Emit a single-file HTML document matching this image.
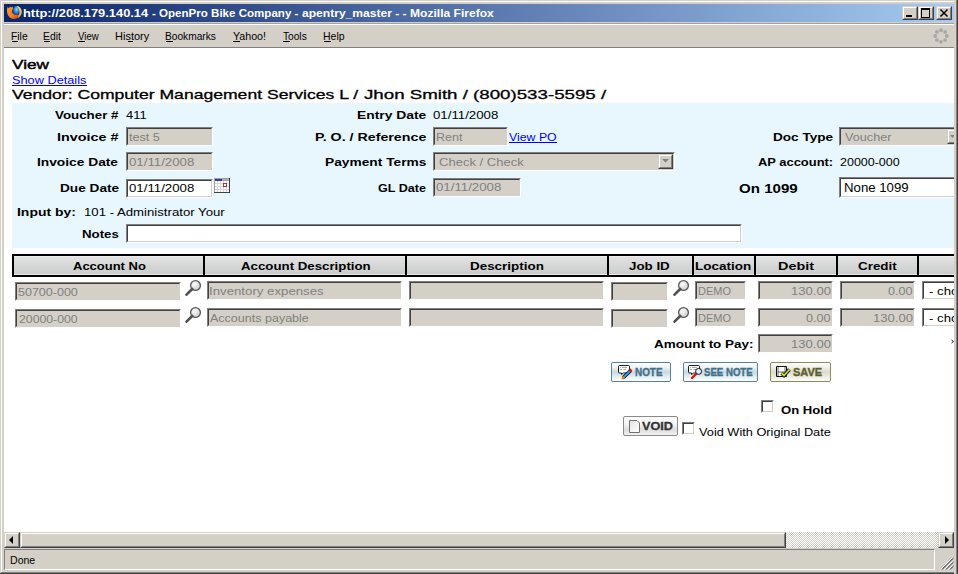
<!DOCTYPE html>
<html><head><meta charset="utf-8"><style>
html,body{margin:0;padding:0;width:958px;height:574px;overflow:hidden;background:#D4D0C8;}
.box{position:absolute;box-sizing:content-box;}
.t{position:absolute;white-space:nowrap;font-family:"Liberation Sans",sans-serif;transform-origin:0 0;}
</style></head><body>
<div class="box" style="left:0;top:0;width:958px;height:574px;background:#404040"></div>
<div class="box" style="left:0;top:0;width:957px;height:573px;background:#D4D0C8"></div>
<div class="box" style="left:1px;top:1px;width:956px;height:572px;background:#808080"></div>
<div class="box" style="left:1px;top:1px;width:955px;height:571px;background:#fff"></div>
<div class="box" style="left:2px;top:2px;width:954px;height:570px;background:#D4D0C8"></div>
<div class="box" style="left:4px;top:4px;width:950px;height:18px;background:linear-gradient(to right,#0A246A,#A6CAF0)"></div>
<svg class="box" style="left:6px;top:4px" width="16" height="16" viewBox="0 0 16 16">
<defs><radialGradient id="gb" cx="0.5" cy="0.35" r="0.6"><stop offset="0" stop-color="#8fd8ff"/><stop offset="0.5" stop-color="#2f86d8"/><stop offset="1" stop-color="#0c2f7a"/></radialGradient>
<linearGradient id="fx" x1="0" y1="0" x2="1" y2="1"><stop offset="0" stop-color="#f7a030"/><stop offset="0.6" stop-color="#f08020"/><stop offset="1" stop-color="#c83a10"/></linearGradient>
<linearGradient id="tl" x1="0" y1="0" x2="0" y2="1"><stop offset="0" stop-color="#ffe060"/><stop offset="1" stop-color="#f0a030"/></linearGradient></defs>
<ellipse cx="10.5" cy="7" rx="3.6" ry="5" fill="url(#gb)"/>
<path d="M11 2 C14.5 2.5 16 6 15.8 8.5 C15.5 11 14 13 12 14 L11 12.5 C12.8 11.5 13.8 9.5 13.5 7.5 C13.2 5 12 3.5 11 2 Z" fill="url(#tl)"/>
<path d="M1.5 3 L3 4.2 L4 2.5 L5 3.5 L6.5 2.5 L7.2 4.8 C6 5.8 5.8 7.5 6.5 9 C7.5 10.5 9.5 11.2 11.5 10.5 L12.5 13.5 C10 15.5 6 15.5 3.5 13.2 C1 11 0.3 7 1.5 3 Z" fill="url(#fx)"/>
</svg>
<div class="box" style="left:902px;top:6px;width:14px;height:12px;background:#D4D0C8;border-top:1px solid #D4D0C8;border-left:1px solid #D4D0C8;border-bottom:1px solid #404040;border-right:1px solid #404040;"><div class="box" style="left:0;top:0;right:0;bottom:0;border-top:1px solid #fff;border-left:1px solid #fff;border-bottom:1px solid #808080;border-right:1px solid #808080;"></div></div>
<div class="box" style="left:918px;top:6px;width:14px;height:12px;background:#D4D0C8;border-top:1px solid #D4D0C8;border-left:1px solid #D4D0C8;border-bottom:1px solid #404040;border-right:1px solid #404040;"><div class="box" style="left:0;top:0;right:0;bottom:0;border-top:1px solid #fff;border-left:1px solid #fff;border-bottom:1px solid #808080;border-right:1px solid #808080;"></div></div>
<div class="box" style="left:936px;top:6px;width:14px;height:12px;background:#D4D0C8;border-top:1px solid #D4D0C8;border-left:1px solid #D4D0C8;border-bottom:1px solid #404040;border-right:1px solid #404040;"><div class="box" style="left:0;top:0;right:0;bottom:0;border-top:1px solid #fff;border-left:1px solid #fff;border-bottom:1px solid #808080;border-right:1px solid #808080;"></div></div>
<div class="box" style="left:906px;top:15px;width:6px;height:2px;background:#000"></div>
<div class="box" style="left:921px;top:8px;width:7px;height:7px;border:1px solid #000;border-top-width:2px"></div>
<svg class="box" style="left:936px;top:6px" width="16" height="14"><path d="M4.5 3.5 L11.5 10.5 M11.5 3.5 L4.5 10.5" stroke="#000" stroke-width="1.6"/></svg>
<div class="box" style="left:4px;top:23px;width:950px;height:1px;background:#A0A0A0"></div>
<div class="box" style="left:4px;top:24px;width:950px;height:1px;background:#fff"></div>
<div class="box" style="left:4px;top:47px;width:950px;height:1px;background:#808080"></div>
<div class="box" style="left:12px;top:41px;width:6px;height:1px;background:#000"></div>
<div class="box" style="left:44px;top:41px;width:6px;height:1px;background:#000"></div>
<div class="box" style="left:78px;top:41px;width:7px;height:1px;background:#000"></div>
<div class="box" style="left:128px;top:41px;width:5px;height:1px;background:#000"></div>
<div class="box" style="left:166px;top:41px;width:7px;height:1px;background:#000"></div>
<div class="box" style="left:233px;top:41px;width:7px;height:1px;background:#000"></div>
<div class="box" style="left:283px;top:41px;width:7px;height:1px;background:#000"></div>
<div class="box" style="left:324px;top:41px;width:7px;height:1px;background:#000"></div>
<svg class="box" style="left:933px;top:28px" width="16" height="16"><circle cx="13.80" cy="8.00" r="1.9" fill="#a8a8a8"/><circle cx="12.10" cy="12.10" r="1.9" fill="#a8a8a8"/><circle cx="8.00" cy="13.80" r="1.9" fill="#a8a8a8"/><circle cx="3.90" cy="12.10" r="1.9" fill="#a8a8a8"/><circle cx="2.20" cy="8.00" r="1.9" fill="#a8a8a8"/><circle cx="3.90" cy="3.90" r="1.9" fill="#a8a8a8"/><circle cx="8.00" cy="2.20" r="1.9" fill="#a8a8a8"/><circle cx="12.10" cy="3.90" r="1.9" fill="#a8a8a8"/></svg>
<div class="box" style="left:4px;top:48px;width:950px;height:484px;background:#fff;overflow:hidden">
</div>
<div class="box" style="left:12px;top:103px;width:942px;height:145px;background:#E8F7FE"></div>
<div class="box" style="left:12px;top:85px;width:75px;height:1px;background:#00f"></div>
<div class="box" style="left:509px;top:142px;width:48px;height:1px;background:#00f"></div>
<div class="box" style="left:126px;top:127px;width:85px;height:17px;background:#D4D0C8;border-top:1px solid #808080;border-left:1px solid #808080;border-bottom:1px solid #fff;border-right:1px solid #fff;"><div class="box" style="left:0;top:0;right:0;bottom:0;border-top:1px solid #404040;border-left:1px solid #404040;border-bottom:1px solid #D4D0C8;border-right:1px solid #D4D0C8;"></div></div>
<div class="box" style="left:126px;top:152px;width:85px;height:17px;background:#D4D0C8;border-top:1px solid #808080;border-left:1px solid #808080;border-bottom:1px solid #fff;border-right:1px solid #fff;"><div class="box" style="left:0;top:0;right:0;bottom:0;border-top:1px solid #404040;border-left:1px solid #404040;border-bottom:1px solid #D4D0C8;border-right:1px solid #D4D0C8;"></div></div>
<div class="box" style="left:126px;top:179px;width:85px;height:17px;background:#fff;border-top:1px solid #808080;border-left:1px solid #808080;border-bottom:1px solid #fff;border-right:1px solid #fff;"><div class="box" style="left:0;top:0;right:0;bottom:0;border-top:1px solid #404040;border-left:1px solid #404040;border-bottom:1px solid #D4D0C8;border-right:1px solid #D4D0C8;"></div></div>
<div class="box" style="left:126px;top:224px;width:614px;height:17px;background:#fff;border-top:1px solid #808080;border-left:1px solid #808080;border-bottom:1px solid #fff;border-right:1px solid #fff;"><div class="box" style="left:0;top:0;right:0;bottom:0;border-top:1px solid #404040;border-left:1px solid #404040;border-bottom:1px solid #D4D0C8;border-right:1px solid #D4D0C8;"></div></div>
<div class="box" style="left:433px;top:127px;width:73px;height:17px;background:#D4D0C8;border-top:1px solid #808080;border-left:1px solid #808080;border-bottom:1px solid #fff;border-right:1px solid #fff;"><div class="box" style="left:0;top:0;right:0;bottom:0;border-top:1px solid #404040;border-left:1px solid #404040;border-bottom:1px solid #D4D0C8;border-right:1px solid #D4D0C8;"></div></div>
<div class="box" style="left:433px;top:152px;width:240px;height:17px;background:#D4D0C8;border-top:1px solid #808080;border-left:1px solid #808080;border-bottom:1px solid #fff;border-right:1px solid #fff;"><div class="box" style="left:0;top:0;right:0;bottom:0;border-top:1px solid #404040;border-left:1px solid #404040;border-bottom:1px solid #D4D0C8;border-right:1px solid #D4D0C8;"></div></div>
<div class="box" style="left:658px;top:154px;width:13px;height:13px;background:#D4D0C8;border-top:1px solid #D4D0C8;border-left:1px solid #D4D0C8;border-bottom:1px solid #404040;border-right:1px solid #404040;"><div class="box" style="left:0;top:0;right:0;bottom:0;border-top:1px solid #fff;border-left:1px solid #fff;border-bottom:1px solid #808080;border-right:1px solid #808080;"></div></div>
<svg class="box" style="left:660px;top:157px" width="11" height="8"><path d="M2 2 L9 2 L5.5 5.5 Z" fill="#808080"/></svg>
<div class="box" style="left:433px;top:178px;width:86px;height:17px;background:#D4D0C8;border-top:1px solid #808080;border-left:1px solid #808080;border-bottom:1px solid #fff;border-right:1px solid #fff;"><div class="box" style="left:0;top:0;right:0;bottom:0;border-top:1px solid #404040;border-left:1px solid #404040;border-bottom:1px solid #D4D0C8;border-right:1px solid #D4D0C8;"></div></div>
<div class="box" style="left:839px;top:127px;width:128px;height:17px;background:#D4D0C8;border-top:1px solid #808080;border-left:1px solid #808080;border-bottom:1px solid #fff;border-right:1px solid #fff;"><div class="box" style="left:0;top:0;right:0;bottom:0;border-top:1px solid #404040;border-left:1px solid #404040;border-bottom:1px solid #D4D0C8;border-right:1px solid #D4D0C8;"></div></div>
<div class="box" style="left:947px;top:129px;width:13px;height:13px;background:#D4D0C8;border-top:1px solid #D4D0C8;border-left:1px solid #D4D0C8;border-bottom:1px solid #404040;border-right:1px solid #404040;"><div class="box" style="left:0;top:0;right:0;bottom:0;border-top:1px solid #fff;border-left:1px solid #fff;border-bottom:1px solid #808080;border-right:1px solid #808080;"></div></div>
<svg class="box" style="left:949px;top:135px" width="8" height="4"><path d="M1 0 H6 L3.5 3 Z" fill="#808080"/></svg>
<div class="box" style="left:839px;top:177px;width:128px;height:19px;background:#fff;border-top:1px solid #808080;border-left:1px solid #808080;border-bottom:1px solid #fff;border-right:1px solid #fff;"><div class="box" style="left:0;top:0;right:0;bottom:0;border-top:1px solid #404040;border-left:1px solid #404040;border-bottom:1px solid #D4D0C8;border-right:1px solid #D4D0C8;"></div></div>
<svg class="box" style="left:214px;top:178px" width="16" height="15" viewBox="0 0 16 15" shape-rendering="crispEdges">
<rect x="0" y="0" width="16" height="15" fill="#d6d6da"/>
<rect x="0" y="0" width="16" height="1" fill="#a0a0a0"/><rect x="0" y="0" width="1" height="15" fill="#a0a0a0"/>
<rect x="15" y="0" width="1" height="15" fill="#404040"/><rect x="0" y="14" width="16" height="1" fill="#404040"/>
<rect x="1" y="1" width="7" height="2" fill="#3636b8"/><rect x="8" y="1" width="7" height="2" fill="#a8a8a8"/>
<rect x="1" y="3" width="2" height="2" fill="#fff"/><rect x="1" y="6" width="2" height="2" fill="#fff"/><rect x="1" y="9" width="2" height="2" fill="#fff"/><rect x="1" y="12" width="2" height="2" fill="#fff"/><rect x="4" y="3" width="2" height="2" fill="#fff"/><rect x="4" y="6" width="2" height="2" fill="#fff"/><rect x="4" y="9" width="2" height="2" fill="#fff"/><rect x="4" y="12" width="2" height="2" fill="#fff"/><rect x="7" y="3" width="2" height="2" fill="#fff"/><rect x="7" y="6" width="2" height="2" fill="#fff"/><rect x="7" y="9" width="2" height="2" fill="#fff"/><rect x="7" y="12" width="2" height="2" fill="#fff"/><rect x="10" y="3" width="2" height="2" fill="#fff"/><rect x="10" y="6" width="2" height="2" fill="#fff"/><rect x="10" y="9" width="2" height="2" fill="#fff"/><rect x="10" y="12" width="2" height="2" fill="#fff"/><rect x="13" y="3" width="2" height="2" fill="#fff"/><rect x="13" y="6" width="2" height="2" fill="#fff"/><rect x="13" y="9" width="2" height="2" fill="#fff"/><rect x="13" y="12" width="2" height="2" fill="#fff"/>
<rect x="9" y="5" width="4" height="4" fill="#b03434"/><rect x="10" y="6" width="2" height="2" fill="#fff"/>
</svg>
<div class="box" style="left:12px;top:254px;width:950px;height:23px;background:#000"></div>
<div class="box" style="left:14px;top:256px;width:950px;height:19px;background:linear-gradient(#EDEDED 0,#EDEDED 1px,#E2E2E2 1px,#CBCCCC 18px,#E6E6E6 18px)"></div>
<div class="box" style="left:203px;top:256px;width:2px;height:19px;background:#000"></div>
<div class="box" style="left:405px;top:256px;width:2px;height:19px;background:#000"></div>
<div class="box" style="left:607px;top:256px;width:2px;height:19px;background:#000"></div>
<div class="box" style="left:692px;top:256px;width:2px;height:19px;background:#000"></div>
<div class="box" style="left:754px;top:256px;width:2px;height:19px;background:#000"></div>
<div class="box" style="left:836px;top:256px;width:2px;height:19px;background:#000"></div>
<div class="box" style="left:917px;top:256px;width:2px;height:19px;background:#000"></div>
<div class="box" style="left:15px;top:282px;width:164px;height:17px;background:#D4D0C8;border-top:1px solid #808080;border-left:1px solid #808080;border-bottom:1px solid #fff;border-right:1px solid #fff;"><div class="box" style="left:0;top:0;right:0;bottom:0;border-top:1px solid #404040;border-left:1px solid #404040;border-bottom:1px solid #D4D0C8;border-right:1px solid #D4D0C8;"></div></div>
<svg class="box" style="left:185px;top:279px" width="17" height="17" viewBox="0 0 17 17">
<defs><radialGradient id="lg0" cx="0.4" cy="0.35" r="0.7"><stop offset="0" stop-color="#fff"/><stop offset="1" stop-color="#c8c8c8"/></radialGradient></defs>
<circle cx="10.5" cy="6.5" r="4.9" fill="url(#lg0)" stroke="#5a5a5a" stroke-width="1.3"/>
<path d="M7.2 10 L1.5 15.7" stroke="#505050" stroke-width="2.6" stroke-linecap="round"/>
</svg>
<div class="box" style="left:207px;top:281px;width:193px;height:17px;background:#D4D0C8;border-top:1px solid #808080;border-left:1px solid #808080;border-bottom:1px solid #fff;border-right:1px solid #fff;"><div class="box" style="left:0;top:0;right:0;bottom:0;border-top:1px solid #404040;border-left:1px solid #404040;border-bottom:1px solid #D4D0C8;border-right:1px solid #D4D0C8;"></div></div>
<div class="box" style="left:409px;top:281px;width:193px;height:17px;background:#D4D0C8;border-top:1px solid #808080;border-left:1px solid #808080;border-bottom:1px solid #fff;border-right:1px solid #fff;"><div class="box" style="left:0;top:0;right:0;bottom:0;border-top:1px solid #404040;border-left:1px solid #404040;border-bottom:1px solid #D4D0C8;border-right:1px solid #D4D0C8;"></div></div>
<div class="box" style="left:611px;top:282px;width:55px;height:17px;background:#D4D0C8;border-top:1px solid #808080;border-left:1px solid #808080;border-bottom:1px solid #fff;border-right:1px solid #fff;"><div class="box" style="left:0;top:0;right:0;bottom:0;border-top:1px solid #404040;border-left:1px solid #404040;border-bottom:1px solid #D4D0C8;border-right:1px solid #D4D0C8;"></div></div>
<svg class="box" style="left:673px;top:279px" width="17" height="17" viewBox="0 0 17 17">
<defs><radialGradient id="lg1" cx="0.4" cy="0.35" r="0.7"><stop offset="0" stop-color="#fff"/><stop offset="1" stop-color="#c8c8c8"/></radialGradient></defs>
<circle cx="10.5" cy="6.5" r="4.9" fill="url(#lg1)" stroke="#5a5a5a" stroke-width="1.3"/>
<path d="M7.2 10 L1.5 15.7" stroke="#505050" stroke-width="2.6" stroke-linecap="round"/>
</svg>
<div class="box" style="left:695px;top:281px;width:49px;height:17px;background:#D4D0C8;border-top:1px solid #808080;border-left:1px solid #808080;border-bottom:1px solid #fff;border-right:1px solid #fff;"><div class="box" style="left:0;top:0;right:0;bottom:0;border-top:1px solid #404040;border-left:1px solid #404040;border-bottom:1px solid #D4D0C8;border-right:1px solid #D4D0C8;"></div></div>
<div class="box" style="left:758px;top:281px;width:73px;height:17px;background:#D4D0C8;border-top:1px solid #808080;border-left:1px solid #808080;border-bottom:1px solid #fff;border-right:1px solid #fff;"><div class="box" style="left:0;top:0;right:0;bottom:0;border-top:1px solid #404040;border-left:1px solid #404040;border-bottom:1px solid #D4D0C8;border-right:1px solid #D4D0C8;"></div></div>
<div class="box" style="left:840px;top:281px;width:73px;height:17px;background:#D4D0C8;border-top:1px solid #808080;border-left:1px solid #808080;border-bottom:1px solid #fff;border-right:1px solid #fff;"><div class="box" style="left:0;top:0;right:0;bottom:0;border-top:1px solid #404040;border-left:1px solid #404040;border-bottom:1px solid #D4D0C8;border-right:1px solid #D4D0C8;"></div></div>
<div class="box" style="left:922px;top:281px;width:58px;height:17px;background:#fff;border-top:1px solid #808080;border-left:1px solid #808080;border-bottom:1px solid #fff;border-right:1px solid #fff;"><div class="box" style="left:0;top:0;right:0;bottom:0;border-top:1px solid #404040;border-left:1px solid #404040;border-bottom:1px solid #D4D0C8;border-right:1px solid #D4D0C8;"></div></div>
<div class="box" style="left:15px;top:309px;width:164px;height:17px;background:#D4D0C8;border-top:1px solid #808080;border-left:1px solid #808080;border-bottom:1px solid #fff;border-right:1px solid #fff;"><div class="box" style="left:0;top:0;right:0;bottom:0;border-top:1px solid #404040;border-left:1px solid #404040;border-bottom:1px solid #D4D0C8;border-right:1px solid #D4D0C8;"></div></div>
<svg class="box" style="left:185px;top:306px" width="17" height="17" viewBox="0 0 17 17">
<defs><radialGradient id="lg2" cx="0.4" cy="0.35" r="0.7"><stop offset="0" stop-color="#fff"/><stop offset="1" stop-color="#c8c8c8"/></radialGradient></defs>
<circle cx="10.5" cy="6.5" r="4.9" fill="url(#lg2)" stroke="#5a5a5a" stroke-width="1.3"/>
<path d="M7.2 10 L1.5 15.7" stroke="#505050" stroke-width="2.6" stroke-linecap="round"/>
</svg>
<div class="box" style="left:207px;top:308px;width:193px;height:17px;background:#D4D0C8;border-top:1px solid #808080;border-left:1px solid #808080;border-bottom:1px solid #fff;border-right:1px solid #fff;"><div class="box" style="left:0;top:0;right:0;bottom:0;border-top:1px solid #404040;border-left:1px solid #404040;border-bottom:1px solid #D4D0C8;border-right:1px solid #D4D0C8;"></div></div>
<div class="box" style="left:409px;top:308px;width:193px;height:17px;background:#D4D0C8;border-top:1px solid #808080;border-left:1px solid #808080;border-bottom:1px solid #fff;border-right:1px solid #fff;"><div class="box" style="left:0;top:0;right:0;bottom:0;border-top:1px solid #404040;border-left:1px solid #404040;border-bottom:1px solid #D4D0C8;border-right:1px solid #D4D0C8;"></div></div>
<div class="box" style="left:611px;top:309px;width:55px;height:17px;background:#D4D0C8;border-top:1px solid #808080;border-left:1px solid #808080;border-bottom:1px solid #fff;border-right:1px solid #fff;"><div class="box" style="left:0;top:0;right:0;bottom:0;border-top:1px solid #404040;border-left:1px solid #404040;border-bottom:1px solid #D4D0C8;border-right:1px solid #D4D0C8;"></div></div>
<svg class="box" style="left:673px;top:306px" width="17" height="17" viewBox="0 0 17 17">
<defs><radialGradient id="lg3" cx="0.4" cy="0.35" r="0.7"><stop offset="0" stop-color="#fff"/><stop offset="1" stop-color="#c8c8c8"/></radialGradient></defs>
<circle cx="10.5" cy="6.5" r="4.9" fill="url(#lg3)" stroke="#5a5a5a" stroke-width="1.3"/>
<path d="M7.2 10 L1.5 15.7" stroke="#505050" stroke-width="2.6" stroke-linecap="round"/>
</svg>
<div class="box" style="left:695px;top:308px;width:49px;height:17px;background:#D4D0C8;border-top:1px solid #808080;border-left:1px solid #808080;border-bottom:1px solid #fff;border-right:1px solid #fff;"><div class="box" style="left:0;top:0;right:0;bottom:0;border-top:1px solid #404040;border-left:1px solid #404040;border-bottom:1px solid #D4D0C8;border-right:1px solid #D4D0C8;"></div></div>
<div class="box" style="left:758px;top:308px;width:73px;height:17px;background:#D4D0C8;border-top:1px solid #808080;border-left:1px solid #808080;border-bottom:1px solid #fff;border-right:1px solid #fff;"><div class="box" style="left:0;top:0;right:0;bottom:0;border-top:1px solid #404040;border-left:1px solid #404040;border-bottom:1px solid #D4D0C8;border-right:1px solid #D4D0C8;"></div></div>
<div class="box" style="left:840px;top:308px;width:73px;height:17px;background:#D4D0C8;border-top:1px solid #808080;border-left:1px solid #808080;border-bottom:1px solid #fff;border-right:1px solid #fff;"><div class="box" style="left:0;top:0;right:0;bottom:0;border-top:1px solid #404040;border-left:1px solid #404040;border-bottom:1px solid #D4D0C8;border-right:1px solid #D4D0C8;"></div></div>
<div class="box" style="left:922px;top:308px;width:58px;height:17px;background:#fff;border-top:1px solid #808080;border-left:1px solid #808080;border-bottom:1px solid #fff;border-right:1px solid #fff;"><div class="box" style="left:0;top:0;right:0;bottom:0;border-top:1px solid #404040;border-left:1px solid #404040;border-bottom:1px solid #D4D0C8;border-right:1px solid #D4D0C8;"></div></div>
<div class="box" style="left:758px;top:334px;width:73px;height:17px;background:#D4D0C8;border-top:1px solid #808080;border-left:1px solid #808080;border-bottom:1px solid #fff;border-right:1px solid #fff;"><div class="box" style="left:0;top:0;right:0;bottom:0;border-top:1px solid #404040;border-left:1px solid #404040;border-bottom:1px solid #D4D0C8;border-right:1px solid #D4D0C8;"></div></div>
<svg class="box" style="left:950px;top:339px" width="5" height="5"><path d="M1.5 1 L3.5 2.5 L1.5 4" stroke="#222" stroke-width="1" fill="none"/></svg>
<div class="box" style="left:611px;top:362px;width:58px;height:18px;border:1px solid #5a8397;border-radius:2px;background:linear-gradient(#fff 0%,#eef3f6 25%,#c8d9e1 50%,#e4edf1 75%,#fff 100%)"></div>
<div class="box" style="left:683px;top:362px;width:73px;height:18px;border:1px solid #5a8397;border-radius:2px;background:linear-gradient(#fff 0%,#eef3f6 25%,#c8d9e1 50%,#e4edf1 75%,#fff 100%)"></div>
<div class="box" style="left:770px;top:362px;width:59px;height:18px;border:1px solid #8f8b5a;border-radius:2px;background:linear-gradient(#fff 0%,#f1f0e8 25%,#dcdac8 50%,#ebeae0 75%,#fff 100%)"></div>
<div class="box" style="left:623px;top:416px;width:53px;height:18px;border:1px solid #8a8a8a;border-radius:2px;background:linear-gradient(#fff 0%,#f4f4f4 40%,#dedede 70%,#f0f0f0 100%)"></div>
<svg class="box" style="left:617px;top:364px" width="16" height="16" viewBox="0 0 16 16">
<path d="M2.5 1.5 H11.5 Q12.5 1.5 12.5 2.5 V8 Q12.5 9 11.5 9 H6.5 L4.5 10.5 V9 H2.5 Q1.5 9 1.5 8 V2.5 Q1.5 1.5 2.5 1.5Z" fill="#fff" stroke="#1a1a1a"/><path d="M3 3.5 H3.8 M5 3.5 H10 M3 5.5 H5 M6.3 5.5 H9" stroke="#aaa"/>
<path d="M6.2 13.8 L13.6 6.4" stroke="#111" stroke-width="3.6"/>
<path d="M6.2 13.8 L13.6 6.4" stroke="#2aa0e8" stroke-width="2"/>
<path d="M12.8 7.2 L14.4 5.6" stroke="#e01010" stroke-width="2.8"/>
<path d="M5.2 14.8 L7 13" stroke="#f07818" stroke-width="2.6"/>
</svg>
<svg class="box" style="left:687px;top:364px" width="16" height="16" viewBox="0 0 16 16">
<path d="M2.5 1.5 H11.5 Q12.5 1.5 12.5 2.5 V8 Q12.5 9 11.5 9 H6.5 L4.5 10.5 V9 H2.5 Q1.5 9 1.5 8 V2.5 Q1.5 1.5 2.5 1.5Z" fill="#fff" stroke="#1a1a1a"/><path d="M3 3.5 H3.8 M5 3.5 H10 M3 5.5 H5 M6.3 5.5 H9" stroke="#aaa"/>
<path d="M5 14 L9 10" stroke="#e01010" stroke-width="2.4" stroke-linecap="round"/>
<circle cx="11.6" cy="7.4" r="3" fill="#d8f0ff" stroke="#111"/>
</svg>
<svg class="box" style="left:775px;top:365px" width="16" height="13" viewBox="0 0 16 13">
<path d="M1.5 1.5 H11.5 V11.5 H1.5 Z" fill="#fff" stroke="#111"/>
<path d="M3 2 V11 M10 2 V7 M3 7 H10" stroke="#444" stroke-width="0.8"/>
<path d="M6.5 8 L9 10.5 L14.5 4.5" stroke="#111" stroke-width="3.4" fill="none"/>
<path d="M6.5 8 L9 10.5 L14.5 4.5" stroke="#c8e020" stroke-width="1.8" fill="none"/>
</svg>
<svg class="box" style="left:629px;top:420px" width="12" height="13" viewBox="0 0 12 13">
<defs><linearGradient id="dg" x1="0" y1="0" x2="1" y2="1"><stop offset="0" stop-color="#e4e4e4"/><stop offset="1" stop-color="#fff"/></linearGradient></defs>
<path d="M0.5 0.5 H8 L10.5 3 V12.5 H0.5 Z" fill="url(#dg)" stroke="#707070"/>
</svg>
<div class="box" style="left:761px;top:400px;width:11px;height:11px;background:#fff;border-top:1px solid #808080;border-left:1px solid #808080;border-bottom:1px solid #fff;border-right:1px solid #fff;"><div class="box" style="left:0;top:0;right:0;bottom:0;border-top:1px solid #404040;border-left:1px solid #404040;border-bottom:1px solid #D4D0C8;border-right:1px solid #D4D0C8;"></div></div>
<div class="box" style="left:682px;top:422px;width:11px;height:11px;background:#fff;border-top:1px solid #808080;border-left:1px solid #808080;border-bottom:1px solid #fff;border-right:1px solid #fff;"><div class="box" style="left:0;top:0;right:0;bottom:0;border-top:1px solid #404040;border-left:1px solid #404040;border-bottom:1px solid #D4D0C8;border-right:1px solid #D4D0C8;"></div></div>
<div class="box" style="left:4px;top:532px;width:950px;height:16px;background:repeating-conic-gradient(#D4D0C8 0 25%,#fff 0 50%) 0 0/2px 2px"></div>
<div class="box" style="left:4px;top:532px;width:14px;height:14px;background:#D4D0C8;border-top:1px solid #D4D0C8;border-left:1px solid #D4D0C8;border-bottom:1px solid #404040;border-right:1px solid #404040;"><div class="box" style="left:0;top:0;right:0;bottom:0;border-top:1px solid #fff;border-left:1px solid #fff;border-bottom:1px solid #808080;border-right:1px solid #808080;"></div></div>
<svg class="box" style="left:4px;top:532px" width="16" height="16"><path d="M5 8 L9 4 V12 Z" fill="#000"/></svg>
<div class="box" style="left:20px;top:532px;width:764px;height:14px;background:#D4D0C8;border-top:1px solid #D4D0C8;border-left:1px solid #D4D0C8;border-bottom:1px solid #404040;border-right:1px solid #404040;"><div class="box" style="left:0;top:0;right:0;bottom:0;border-top:1px solid #fff;border-left:1px solid #fff;border-bottom:1px solid #808080;border-right:1px solid #808080;"></div></div>
<div class="box" style="left:938px;top:532px;width:14px;height:14px;background:#D4D0C8;border-top:1px solid #D4D0C8;border-left:1px solid #D4D0C8;border-bottom:1px solid #404040;border-right:1px solid #404040;"><div class="box" style="left:0;top:0;right:0;bottom:0;border-top:1px solid #fff;border-left:1px solid #fff;border-bottom:1px solid #808080;border-right:1px solid #808080;"></div></div>
<svg class="box" style="left:938px;top:532px" width="16" height="16"><path d="M11 8 L7 4 V12 Z" fill="#000"/></svg>
<div class="box" style="left:4px;top:549px;width:929px;height:19px;border-top:1px solid #808080;border-left:1px solid #808080;border-right:1px solid #fff;border-bottom:1px solid #fff"></div>
<svg class="box" style="left:940px;top:557px" width="14" height="13"><path d="M12.5 0.5 L0.5 12.5 M12.5 4.5 L4.5 12.5 M12.5 8.5 L8.5 12.5" stroke="#fff" stroke-width="1"/><path d="M13.5 0.5 L1.5 12.5 M13.5 1.5 L2.5 12.5 M13.5 4.5 L5.5 12.5 M13.5 5.5 L6.5 12.5 M13.5 8.5 L9.5 12.5 M13.5 9.5 L10.5 12.5" stroke="#808080" stroke-width="1"/></svg>
<div class="t" style="left:22.83px;top:8px;font-size:11px;line-height:11px;color:#fff;transform:scaleX(1.1698);font-weight:bold;">http://208.179.140.14</div>
<div class="t" style="left:152.00px;top:8px;font-size:11px;line-height:11px;color:#fff;transform:scaleX(1.0504);font-weight:bold;">- OpenPro Bike Company -</div>
<div class="t" style="left:302.00px;top:8px;font-size:11px;line-height:11px;color:#fff;transform:scaleX(1.0971);font-weight:bold;">apentry_master - - Mozilla Firefox</div>
<div class="t" style="left:11.06px;top:31px;font-size:11px;line-height:11px;color:#000;transform:scaleX(0.9375);">File</div>
<div class="t" style="left:43.06px;top:31px;font-size:11px;line-height:11px;color:#000;transform:scaleX(0.9444);">Edit</div>
<div class="t" style="left:78.00px;top:31px;font-size:11px;line-height:11px;color:#000;transform:scaleX(0.8750);">View</div>
<div class="t" style="left:115.00px;top:31px;font-size:11px;line-height:11px;color:#000;transform:scaleX(1.0000);">History</div>
<div class="t" style="left:165.07px;top:31px;font-size:11px;line-height:11px;color:#000;transform:scaleX(0.9259);">Bookmarks</div>
<div class="t" style="left:233.00px;top:31px;font-size:11px;line-height:11px;color:#000;transform:scaleX(0.9697);">Yahoo!</div>
<div class="t" style="left:283.00px;top:31px;font-size:11px;line-height:11px;color:#000;transform:scaleX(0.9231);">Tools</div>
<div class="t" style="left:323.05px;top:31px;font-size:11px;line-height:11px;color:#000;transform:scaleX(0.9524);">Help</div>
<div class="t" style="left:12.00px;top:58px;font-size:13px;line-height:13px;color:#000;transform:scaleX(1.3214);-webkit-text-stroke:0.45px #000;">View</div>
<div class="t" style="left:11.84px;top:75px;font-size:11px;line-height:11px;color:#00f;transform:scaleX(1.1587);">Show Details</div>
<div class="t" style="left:12.00px;top:88px;font-size:13px;line-height:13px;color:#000;transform:scaleX(1.3516);-webkit-text-stroke:0.3px #000;">Vendor: Computer Management Services L /</div>
<div class="t" style="left:364.00px;top:88px;font-size:13px;line-height:13px;color:#000;transform:scaleX(1.4379);-webkit-text-stroke:0.3px #000;">Jhon Smith / (800)533-5595 /</div>
<div class="t" style="left:55.00px;top:110px;font-size:11px;line-height:11px;color:#000;transform:scaleX(1.2115);font-weight:bold;">Voucher #</div>
<div class="t" style="left:126.00px;top:110px;font-size:11px;line-height:11px;color:#000;transform:scaleX(1.1765);">411</div>
<div class="t" style="left:56.70px;top:132px;font-size:11px;line-height:11px;color:#000;transform:scaleX(1.3043);font-weight:bold;">Invoice #</div>
<div class="t" style="left:129.00px;top:132px;font-size:11px;line-height:11px;color:#808080;transform:scaleX(1.1481);">test 5</div>
<div class="t" style="left:36.75px;top:157px;font-size:11px;line-height:11px;color:#000;transform:scaleX(1.2500);font-weight:bold;">Invoice Date</div>
<div class="t" style="left:129.00px;top:157px;font-size:11px;line-height:11px;color:#808080;transform:scaleX(1.2037);">01/11/2008</div>
<div class="t" style="left:59.76px;top:183px;font-size:11px;line-height:11px;color:#000;transform:scaleX(1.2391);font-weight:bold;">Due Date</div>
<div class="t" style="left:129.00px;top:183px;font-size:11px;line-height:11px;color:#000;transform:scaleX(1.2037);">01/11/2008</div>
<div class="t" style="left:16.73px;top:207px;font-size:11px;line-height:11px;color:#000;transform:scaleX(1.2667);font-weight:bold;">Input by:</div>
<div class="t" style="left:83.80px;top:207px;font-size:11px;line-height:11px;color:#000;transform:scaleX(1.1983);">101 - Administrator Your</div>
<div class="t" style="left:81.79px;top:229px;font-size:11px;line-height:11px;color:#000;transform:scaleX(1.2069);font-weight:bold;">Notes</div>
<div class="t" style="left:356.74px;top:110px;font-size:11px;line-height:11px;color:#000;transform:scaleX(1.2593);font-weight:bold;">Entry Date</div>
<div class="t" style="left:433.00px;top:110px;font-size:11px;line-height:11px;color:#000;transform:scaleX(1.2037);">01/11/2008</div>
<div class="t" style="left:314.71px;top:132px;font-size:11px;line-height:11px;color:#000;transform:scaleX(1.2941);font-weight:bold;">P. O. / Reference</div>
<div class="t" style="left:435.86px;top:132px;font-size:11px;line-height:11px;color:#808080;transform:scaleX(1.1364);">Rent</div>
<div class="t" style="left:509.00px;top:132px;font-size:11px;line-height:11px;color:#00f;transform:scaleX(1.1190);">View PO</div>
<div class="t" style="left:324.75px;top:157px;font-size:11px;line-height:11px;color:#000;transform:scaleX(1.2500);font-weight:bold;">Payment Terms</div>
<div class="t" style="left:438.81px;top:157px;font-size:11px;line-height:11px;color:#808080;transform:scaleX(1.1857);">Check / Check</div>
<div class="t" style="left:378.00px;top:183px;font-size:11px;line-height:11px;color:#000;transform:scaleX(1.1429);font-weight:bold;">GL Date</div>
<div class="t" style="left:436.00px;top:182px;font-size:11px;line-height:11px;color:#808080;transform:scaleX(1.2037);">01/11/2008</div>
<div class="t" style="left:772.77px;top:132px;font-size:11px;line-height:11px;color:#000;transform:scaleX(1.2340);font-weight:bold;">Doc Type</div>
<div class="t" style="left:845.00px;top:132px;font-size:11px;line-height:11px;color:#808080;transform:scaleX(1.1500);">Voucher</div>
<div class="t" style="left:758.00px;top:157px;font-size:11px;line-height:11px;color:#000;transform:scaleX(1.1746);font-weight:bold;">AP account:</div>
<div class="t" style="left:840.00px;top:157px;font-size:11px;line-height:11px;color:#000;transform:scaleX(1.1346);">20000-000</div>
<div class="t" style="left:739.00px;top:182px;font-size:13px;line-height:13px;color:#000;transform:scaleX(1.1600);font-weight:bold;">On 1099</div>
<div class="t" style="left:843.98px;top:181px;font-size:13px;line-height:13px;color:#000;transform:scaleX(1.0161);">None 1099</div>
<div class="t" style="left:73.00px;top:261px;font-size:11px;line-height:11px;color:#000;transform:scaleX(1.1803);font-weight:bold;">Account No</div>
<div class="t" style="left:241.00px;top:261px;font-size:11px;line-height:11px;color:#000;transform:scaleX(1.2056);font-weight:bold;">Account Description</div>
<div class="t" style="left:469.78px;top:261px;font-size:11px;line-height:11px;color:#000;transform:scaleX(1.2203);font-weight:bold;">Description</div>
<div class="t" style="left:629.00px;top:261px;font-size:11px;line-height:11px;color:#000;transform:scaleX(1.2121);font-weight:bold;">Job ID</div>
<div class="t" style="left:694.77px;top:261px;font-size:11px;line-height:11px;color:#000;transform:scaleX(1.2273);font-weight:bold;">Location</div>
<div class="t" style="left:777.69px;top:261px;font-size:11px;line-height:11px;color:#000;transform:scaleX(1.3077);font-weight:bold;">Debit</div>
<div class="t" style="left:858.00px;top:261px;font-size:11px;line-height:11px;color:#000;transform:scaleX(1.2188);font-weight:bold;">Credit</div>
<div class="t" style="left:17.86px;top:287px;font-size:11px;line-height:11px;color:#808080;transform:scaleX(1.1373);">50700-000</div>
<div class="t" style="left:208.80px;top:286px;font-size:11px;line-height:11px;color:#808080;transform:scaleX(1.2021);">Inventory expenses</div>
<div class="t" style="left:698.00px;top:286px;font-size:11px;line-height:11px;color:#808080;transform:scaleX(1.0000);">DEMO</div>
<div class="t" style="left:790.81px;top:286px;font-size:11px;line-height:11px;color:#808080;transform:scaleX(1.1875);">130.00</div>
<div class="t" style="left:888.00px;top:286px;font-size:11px;line-height:11px;color:#808080;transform:scaleX(1.1429);">0.00</div>
<div class="t" style="left:929.00px;top:286px;font-size:11px;line-height:11px;color:#000;transform:scaleX(1.2000);">- cho</div>
<div class="t" style="left:19.00px;top:314px;font-size:11px;line-height:11px;color:#808080;transform:scaleX(1.1154);">20000-000</div>
<div class="t" style="left:210.00px;top:313px;font-size:11px;line-height:11px;color:#808080;transform:scaleX(1.1379);">Accounts payable</div>
<div class="t" style="left:698.00px;top:313px;font-size:11px;line-height:11px;color:#808080;transform:scaleX(1.0000);">DEMO</div>
<div class="t" style="left:806.00px;top:313px;font-size:11px;line-height:11px;color:#808080;transform:scaleX(1.1429);">0.00</div>
<div class="t" style="left:872.81px;top:313px;font-size:11px;line-height:11px;color:#808080;transform:scaleX(1.1875);">130.00</div>
<div class="t" style="left:929.00px;top:313px;font-size:11px;line-height:11px;color:#000;transform:scaleX(1.2000);">- cho</div>
<div class="t" style="left:654.00px;top:339px;font-size:11px;line-height:11px;color:#000;transform:scaleX(1.2250);font-weight:bold;">Amount to Pay:</div>
<div class="t" style="left:790.81px;top:339px;font-size:11px;line-height:11px;color:#808080;transform:scaleX(1.1875);">130.00</div>
<div class="t" style="left:635.10px;top:367px;font-size:11px;line-height:11px;color:#41718a;transform:scaleX(0.9000);font-weight:bold;-webkit-text-stroke:0.35px #41718a;">NOTE</div>
<div class="t" style="left:704.00px;top:367px;font-size:11px;line-height:11px;color:#41718a;transform:scaleX(0.8750);font-weight:bold;-webkit-text-stroke:0.35px #41718a;">SEE NOTE</div>
<div class="t" style="left:793.00px;top:367px;font-size:11px;line-height:11px;color:#5e5e2e;transform:scaleX(1.0000);font-weight:bold;-webkit-text-stroke:0.35px #5e5e2e;">SAVE</div>
<div class="t" style="left:642.00px;top:421px;font-size:11px;line-height:11px;color:#333;transform:scaleX(1.1481);font-weight:bold;-webkit-text-stroke:0.3px #333;">VOID</div>
<div class="t" style="left:781.00px;top:405px;font-size:11px;line-height:11px;color:#000;transform:scaleX(1.1905);font-weight:bold;">On Hold</div>
<div class="t" style="left:699.00px;top:427px;font-size:11px;line-height:11px;color:#000;transform:scaleX(1.1593);">Void With Original Date</div>
<div class="t" style="left:10.04px;top:555px;font-size:11px;line-height:11px;color:#000;transform:scaleX(0.9600);">Done</div>
<div class="box" style="left:954px;top:0;width:2px;height:574px;background:#D4D0C8"></div><div class="box" style="left:956px;top:0;width:1px;height:574px;background:#808080"></div><div class="box" style="left:957px;top:0;width:1px;height:574px;background:#404040"></div>
</body></html>
